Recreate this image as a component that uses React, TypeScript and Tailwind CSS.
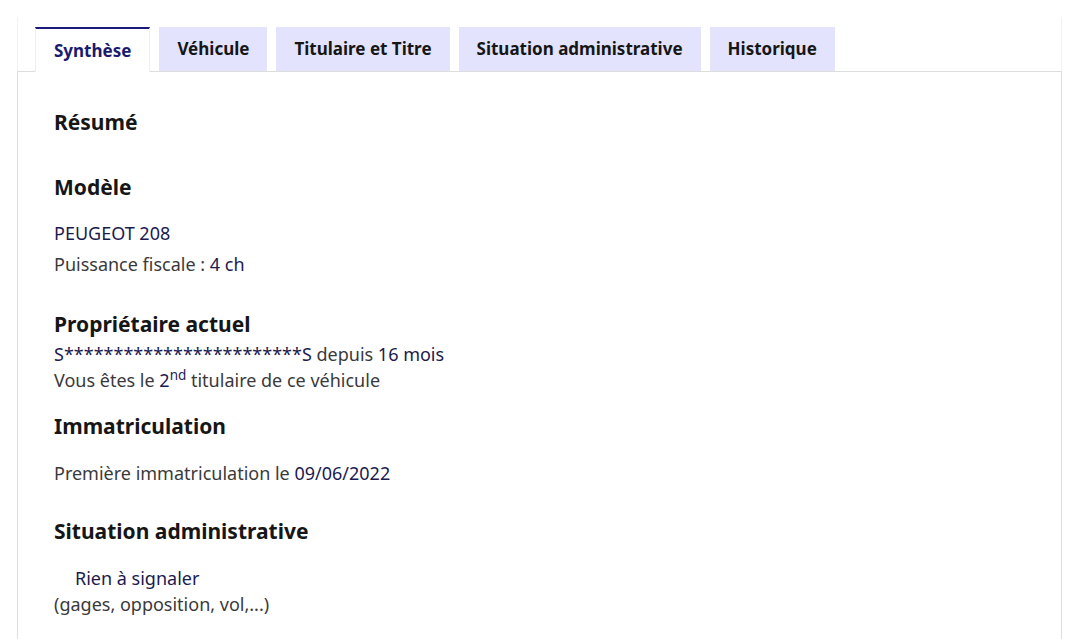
const tabs = ['Synthèse', 'Véhicule', 'Titulaire et Titre', 'Situation administrative', 'Historique'];

function Heading({ children, className = '' }: { children: React.ReactNode; className?: string }) {
  return <h3 className={`text-[21px] leading-[28px] font-bold text-[#161616] ${className}`}>{children}</h3>;
}

export default function App() {
  const active = 0;

  return (
    <div className="min-h-[639px] bg-white pt-[17px] px-[17px] font-['Noto_Sans','Open_Sans',sans-serif] text-[18px] leading-[26px] text-[#3a3a3a]">
      <div className="border-x border-[#f3f3f3]">
        {/* Tabs */}
        <div className="flex items-end gap-[9px] pl-[17px] pt-[10px]">
          {tabs.map((tab, i) => (
            <button
              key={tab}
              className={
                i === active
                  ? 'h-[45px] -mb-px px-[18px] bg-white border-t-2 border-[#1a1a78] border-x border-x-[#eee] text-[#1a1a6e] font-bold text-[17px] relative z-10'
                  : 'h-[44px] px-[18px] bg-[#e3e3fd] text-[#161616] font-bold text-[17px]'
              }
            >
              {tab}
            </button>
          ))}
        </div>

        {/* Panel */}
        <div className="-mx-px border border-[#dddddd] border-b-0 px-[36px] pt-[36px] pb-10 min-h-[568px]">
          <Heading>Résumé</Heading>

          <Heading className="mt-[37px]">Modèle</Heading>
          <p className="mt-[19px] text-[#1b1b50]">PEUGEOT 208</p>
          <p className="mt-[5px]">
            Puissance fiscale : <span className="text-[#1b1b50]">4 ch</span>
          </p>

          <Heading className="mt-[33px]">Propriétaire actuel</Heading>
          <p className="mt-[3px]">
            <span className="text-[#1b1b50]">S************************S</span> depuis{' '}
            <span className="text-[#1b1b50]">16 mois</span>
          </p>
          <p>
            Vous êtes le <span className="text-[#1b1b50]">2<sup>nd</sup></span> titulaire de ce véhicule
          </p>

          <Heading className="mt-[19px]">Immatriculation</Heading>
          <p className="mt-[20px]">
            Première immatriculation le <span className="text-[#1b1b50]">09/06/2022</span>
          </p>

          <Heading className="mt-[31px]">Situation administrative</Heading>
          <p className="mt-[20px] pl-[21px] text-[#1b1b50]">Rien à signaler</p>
          <p>(gages, opposition, vol,...)</p>
        </div>
      </div>
    </div>
  );
}
